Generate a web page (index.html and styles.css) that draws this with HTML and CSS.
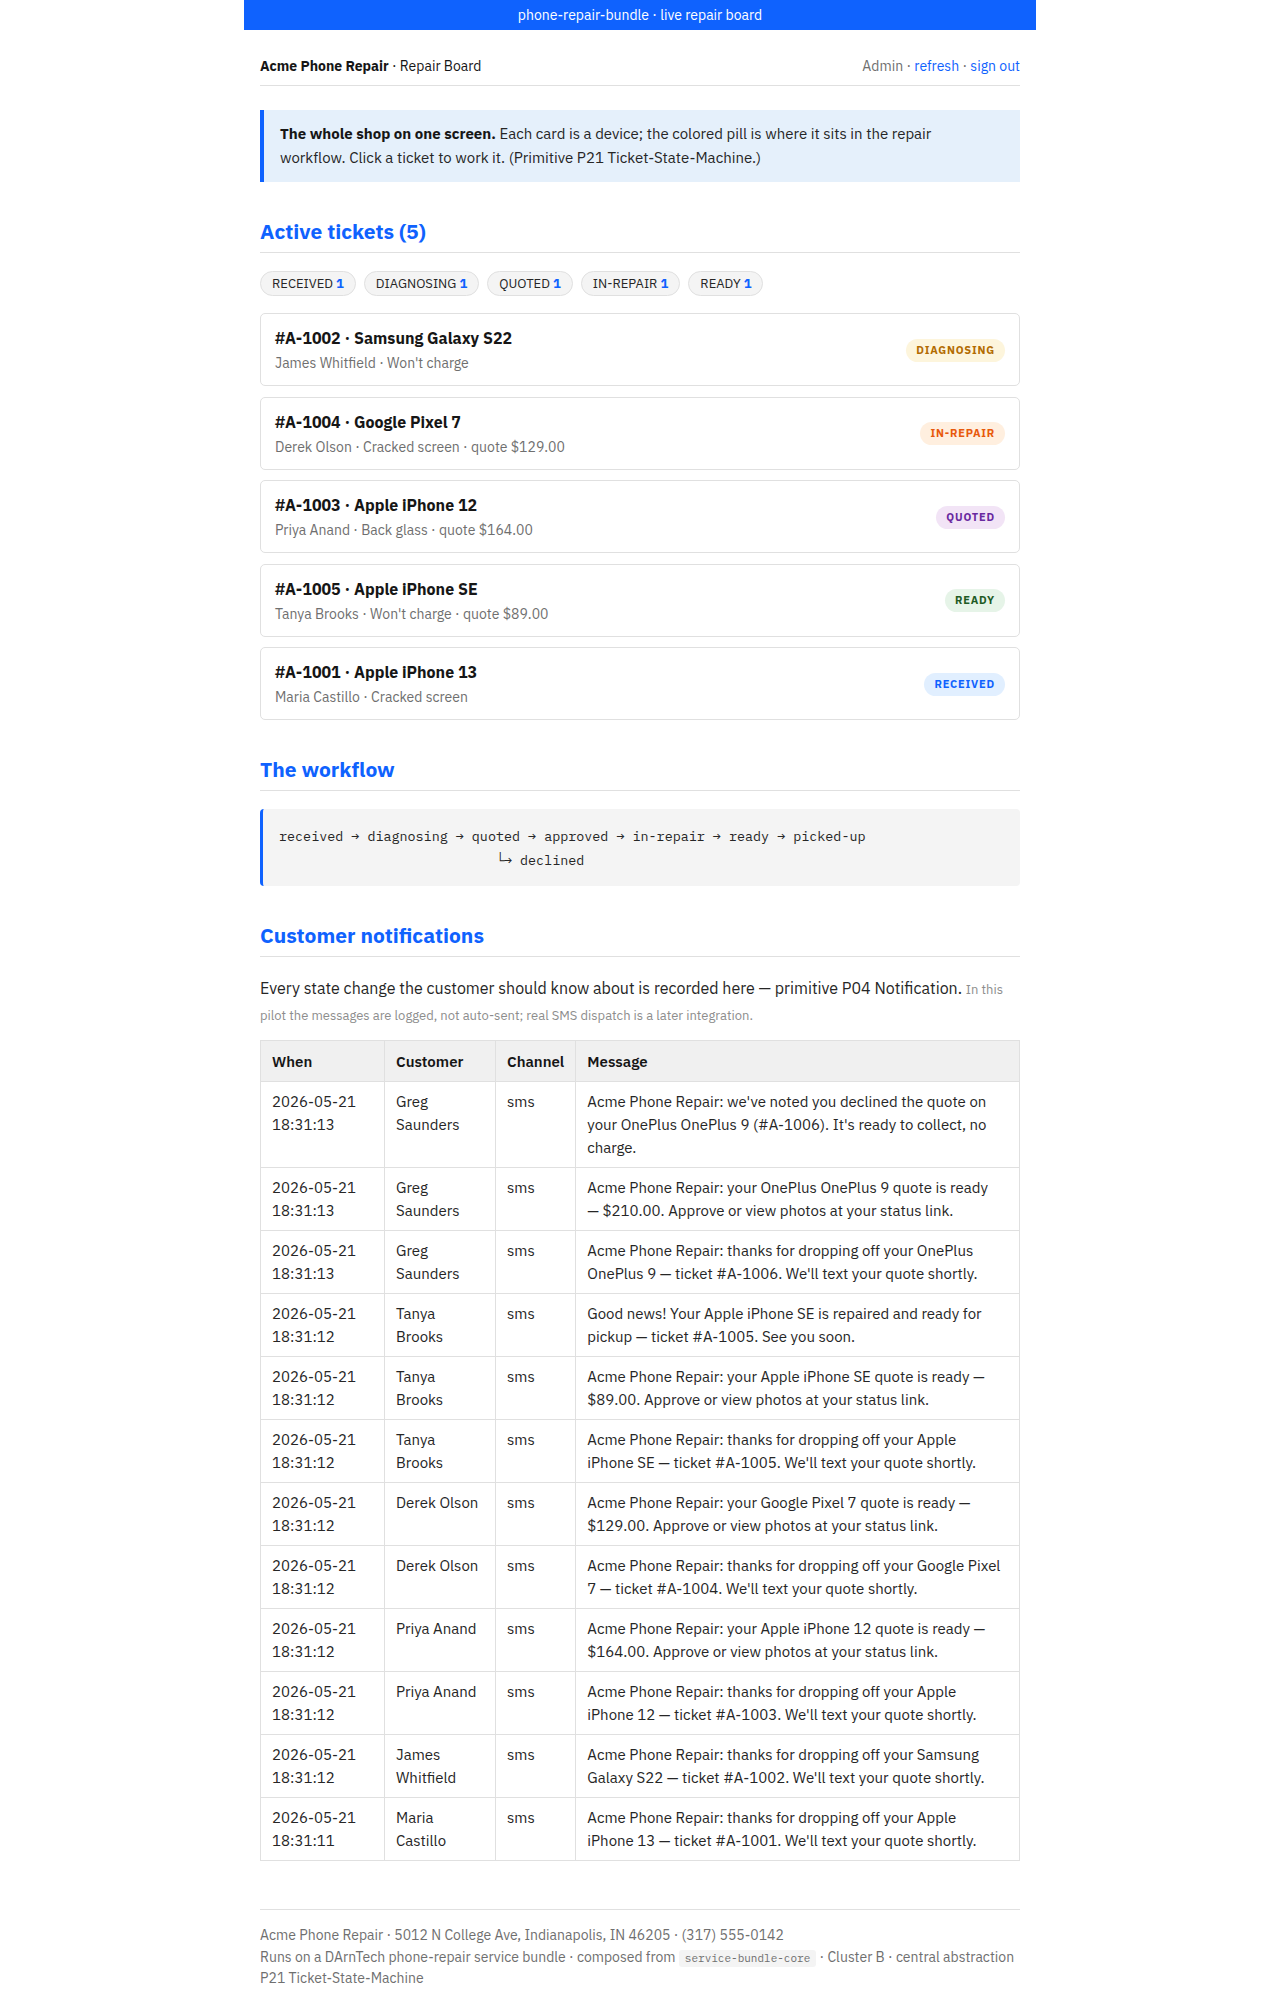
FILE: index.html
```html
<!DOCTYPE html>
<html lang="en">
<head>
<meta charset="utf-8">
<title>Acme Phone Repair · Repair Board</title>
<link rel="stylesheet" href="styles.css">
</head>
<body>
<div class="page">
  <div class="topbar">phone-repair-bundle · live repair board</div>
  <div class="wrap">
    <header class="head">
      <div class="brand"><strong>Acme Phone Repair</strong> · Repair Board</div>
      <div class="user">Admin · <a href="#">refresh</a> · <a href="#">sign out</a></div>
    </header>

    <div class="callout"><strong>The whole shop on one screen.</strong> Each card is a device; the colored pill is where it sits in the repair workflow. Click a ticket to work it. (Primitive P21 Ticket-State-Machine.)</div>

    <h2 class="sec">Active tickets (5)</h2>
    <div class="filters">
      <span class="fpill">RECEIVED <b>1</b></span>
      <span class="fpill">DIAGNOSING <b>1</b></span>
      <span class="fpill">QUOTED <b>1</b></span>
      <span class="fpill">IN-REPAIR <b>1</b></span>
      <span class="fpill">READY <b>1</b></span>
    </div>

    <div class="cards">
      <a class="card" href="#">
        <div class="card-main">
          <div class="card-title">#A-1002 · Samsung Galaxy S22</div>
          <div class="card-sub">James Whitfield · Won't charge</div>
        </div>
        <span class="state st-diag">DIAGNOSING</span>
      </a>
      <a class="card" href="#">
        <div class="card-main">
          <div class="card-title">#A-1004 · Google Pixel 7</div>
          <div class="card-sub">Derek Olson · Cracked screen · quote $129.00</div>
        </div>
        <span class="state st-repair">IN-REPAIR</span>
      </a>
      <a class="card" href="#">
        <div class="card-main">
          <div class="card-title">#A-1003 · Apple iPhone 12</div>
          <div class="card-sub">Priya Anand · Back glass · quote $164.00</div>
        </div>
        <span class="state st-quoted">QUOTED</span>
      </a>
      <a class="card" href="#">
        <div class="card-main">
          <div class="card-title">#A-1005 · Apple iPhone SE</div>
          <div class="card-sub">Tanya Brooks · Won't charge · quote $89.00</div>
        </div>
        <span class="state st-ready">READY</span>
      </a>
      <a class="card" href="#">
        <div class="card-main">
          <div class="card-title">#A-1001 · Apple iPhone 13</div>
          <div class="card-sub">Maria Castillo · Cracked screen</div>
        </div>
        <span class="state st-received">RECEIVED</span>
      </a>
    </div>

    <h2 class="sec">The workflow</h2>
    <pre class="flow">received → diagnosing → quoted → approved → in-repair → ready → picked-up
                           └→ declined</pre>

    <h2 class="sec">Customer notifications</h2>
    <p class="lead">Every state change the customer should know about is recorded here — primitive P04 Notification. <small>In this pilot the messages are logged, not auto-sent; real SMS dispatch is a later integration.</small></p>

    <table class="log">
      <thead>
        <tr><th class="c-when">When</th><th class="c-cust">Customer</th><th class="c-chan">Channel</th><th class="c-msg">Message</th></tr>
      </thead>
      <tbody>
        <tr><td>2026-05-21 18:31:13</td><td>Greg Saunders</td><td>sms</td><td class="c-msg">Acme Phone Repair: we've noted you declined the quote on your OnePlus OnePlus 9 (#A-1006). It's ready to collect, no charge.</td></tr>
        <tr><td>2026-05-21 18:31:13</td><td>Greg Saunders</td><td>sms</td><td class="c-msg">Acme Phone Repair: your OnePlus OnePlus 9 quote is ready — $210.00. Approve or view photos at your status link.</td></tr>
        <tr><td>2026-05-21 18:31:13</td><td>Greg Saunders</td><td>sms</td><td class="c-msg">Acme Phone Repair: thanks for dropping off your OnePlus OnePlus 9 — ticket #A-1006. We'll text your quote shortly.</td></tr>
        <tr><td>2026-05-21 18:31:12</td><td>Tanya Brooks</td><td>sms</td><td class="c-msg">Good news! Your Apple iPhone SE is repaired and ready for pickup — ticket #A-1005. See you soon.</td></tr>
        <tr><td>2026-05-21 18:31:12</td><td>Tanya Brooks</td><td>sms</td><td class="c-msg">Acme Phone Repair: your Apple iPhone SE quote is ready — $89.00. Approve or view photos at your status link.</td></tr>
        <tr><td>2026-05-21 18:31:12</td><td>Tanya Brooks</td><td>sms</td><td class="c-msg">Acme Phone Repair: thanks for dropping off your Apple iPhone SE — ticket #A-1005. We'll text your quote shortly.</td></tr>
        <tr><td>2026-05-21 18:31:12</td><td>Derek Olson</td><td>sms</td><td class="c-msg">Acme Phone Repair: your Google Pixel 7 quote is ready — $129.00. Approve or view photos at your status link.</td></tr>
        <tr><td>2026-05-21 18:31:12</td><td>Derek Olson</td><td>sms</td><td class="c-msg">Acme Phone Repair: thanks for dropping off your Google Pixel 7 — ticket #A-1004. We'll text your quote shortly.</td></tr>
        <tr><td>2026-05-21 18:31:12</td><td>Priya Anand</td><td>sms</td><td class="c-msg">Acme Phone Repair: your Apple iPhone 12 quote is ready — $164.00. Approve or view photos at your status link.</td></tr>
        <tr><td>2026-05-21 18:31:12</td><td>Priya Anand</td><td>sms</td><td class="c-msg">Acme Phone Repair: thanks for dropping off your Apple iPhone 12 — ticket #A-1003. We'll text your quote shortly.</td></tr>
        <tr><td>2026-05-21 18:31:12</td><td>James Whitfield</td><td>sms</td><td class="c-msg">Acme Phone Repair: thanks for dropping off your Samsung Galaxy S22 — ticket #A-1002. We'll text your quote shortly.</td></tr>
        <tr><td>2026-05-21 18:31:11</td><td>Maria Castillo</td><td>sms</td><td class="c-msg">Acme Phone Repair: thanks for dropping off your Apple iPhone 13 — ticket #A-1001. We'll text your quote shortly.</td></tr>
      </tbody>
    </table>

    <footer class="foot">
      <div>Acme Phone Repair · 5012 N College Ave, Indianapolis, IN 46205 · (317) 555-0142</div>
      <div>Runs on a DArnTech phone-repair service bundle · composed from <code>service-bundle-core</code> · Cluster B · central abstraction P21 Ticket-State-Machine</div>
    </footer>
  </div>
</div>
</body>
</html>
```

FILE: styles.css
```css
* { box-sizing: border-box; }
html, body { margin: 0; padding: 0; background: #fff; }
body {
  font-family: "IBM Plex Sans", Roboto, "Liberation Sans", sans-serif;
  color: #161616;
  font-size: 15px;
  line-height: 1.6;
}
a { color: #0f62fe; text-decoration: none; }
.page { width: 792px; margin: 0 auto; }
.topbar {
  background: #0f62fe;
  color: #fff;
  text-align: center;
  font-size: 14px;
  height: 30px;
  line-height: 30px;
}
.wrap { padding: 0 16px 30px; }
.head {
  display: flex;
  justify-content: space-between;
  align-items: center;
  font-size: 14px;
  padding: 25px 0 8px;
  border-bottom: 1px solid #e0e0e0;
}
.user { color: #6f6f6f; }
.callout {
  margin-top: 24px;
  background: #e5f0fb;
  border-left: 4px solid #0f62fe;
  padding: 12px 20px 12px 16px;
  font-size: 15px;
  line-height: 24px;
  color: #262626;
}
.callout strong { color: #161616; }
.sec {
  font-size: 21px;
  font-weight: 700;
  color: #0f62fe;
  margin: 34px 0 18px;
  padding-bottom: 6px;
  border-bottom: 1px solid #e0e0e0;
  line-height: 30px;
}
.filters { display: flex; gap: 8px; flex-wrap: wrap; }
.fpill {
  background: #f4f4f4;
  border: 1px solid #e0e0e0;
  border-radius: 13px;
  font-size: 13px;
  line-height: 23px;
  padding: 0 11px;
  color: #262626;
}
.fpill b { color: #0f62fe; }
.cards { display: flex; flex-direction: column; gap: 10.5px; margin-top: 17px; }
.card {
  display: flex;
  align-items: center;
  justify-content: space-between;
  border: 1px solid #e0e0e0;
  border-radius: 5px;
  padding: 13px 14px 12px;
  color: #161616;
  height: 73px;
}
.card-title { font-size: 16px; font-weight: 700; line-height: 24px; }
.card-sub { font-size: 14px; color: #6f6f6f; line-height: 22px; margin-top: 2px; }
.state {
  font-size: 11px;
  font-weight: 700;
  letter-spacing: 0.8px;
  border-radius: 12px;
  padding: 0 10px;
  line-height: 23px;
}
.st-diag { background: #fdf5dc; color: #b26b00; }
.st-repair { background: #ffefdf; color: #e8590c; }
.st-quoted { background: #f2e4f6; color: #6929a0; }
.st-ready { background: #e6f4e8; color: #1e5b24; }
.st-received { background: #e1efff; color: #0f62fe; }
.flow {
  margin: 16px 0 0;
  background: #f4f4f4;
  border-left: 3px solid #0f62fe;
  border-radius: 4px;
  padding: 15px 16px 14px;
  font-family: "IBM Plex Mono", "DejaVu Sans Mono", "Liberation Mono", monospace;
  font-size: 13.4px;
  line-height: 24px;
  color: #262626;
}
.lead { margin: 14px 0 13px; font-size: 16px; line-height: 26px; color: #262626; }
.lead small { font-size: 13px; line-height: 1; color: #8d8d8d; }
.log { width: 100%; border-collapse: collapse; font-size: 15px; line-height: 23px; }
.log th, .log td {
  border: 1px solid #e0e0e0;
  text-align: left;
  vertical-align: top;
  padding: 8px 11px 8px;
}
.log th { background: #f0f0f0; font-weight: 600; padding: 9px 11px 8px; }
.log td { color: #262626; }
.log .c-msg { padding-right: 17px; }
.c-when { width: 124px; }
.c-cust { width: 111px; }
.c-chan { width: 79px; }
.foot {
  margin-top: 48px;
  border-top: 1px solid #e0e0e0;
  padding-top: 15px;
  font-size: 14px;
  line-height: 21.5px;
  color: #6f6f6f;
}
.foot code {
  font-family: "IBM Plex Mono", "DejaVu Sans Mono", "Liberation Mono", monospace;
  font-size: 11px;
  line-height: 17px;
  display: inline-block;
  background: #f4f4f4;
  padding: 0 6px;
  border-radius: 3px;
}
```
